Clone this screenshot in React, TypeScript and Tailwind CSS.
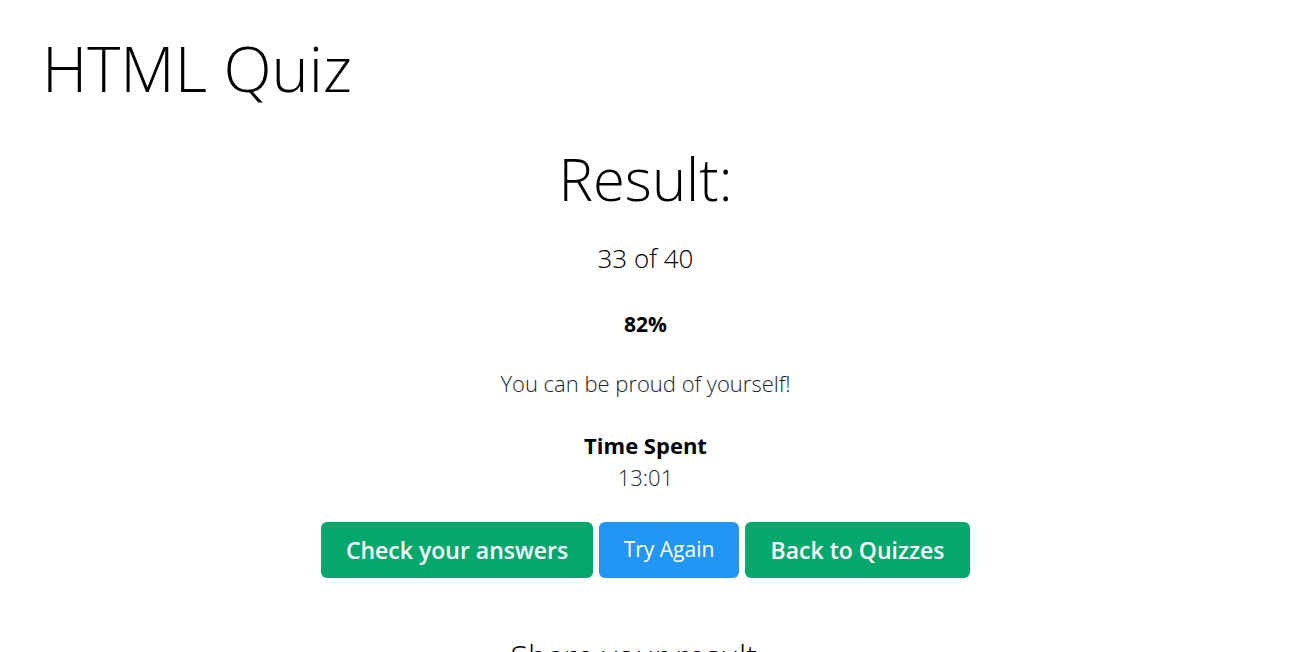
import React from "react";

export default function App() {
  return (
    <div className="min-h-screen overflow-hidden bg-white text-black" style={{ fontFamily: '"Open Sans", "Noto Sans", sans-serif' }}>
      <div className="px-[42px] pt-[30px]">
        <h1 className="text-[63px] font-light leading-[76px]">HTML Quiz</h1>
      </div>
      <div className="flex flex-col items-center pr-[3px] text-center">
        <h2 className="mt-[38px] text-[58px] font-light leading-[70px]">Result:</h2>
        <p className="mt-[26px] text-[26px] font-light leading-[36px]">33 of 40</p>
        <p className="mt-[33px] text-[21px] font-bold leading-[30px]">82%</p>
        <p className="mt-[28px] text-[22px] font-light leading-[32px] text-[#212529]">You can be proud of yourself!</p>
        <div className="mt-[30px] flex flex-col items-center">
          <p className="text-[22px] font-bold leading-[32px]">Time Spent</p>
          <p className="text-[22px] font-light leading-[32px] text-[#212529]">13:01</p>
        </div>
        <div className="mt-[29px] flex gap-[6px]">
          <button className="h-[56px] w-[272px] rounded-[6px] bg-[#04a86d] text-white text-[23px] font-semibold">Check your answers</button>
          <button className="h-[56px] w-[140px] rounded-[6px] bg-[#2196f3] text-white text-[21px] font-normal">Try Again</button>
          <button className="h-[56px] w-[225px] rounded-[6px] bg-[#04a86d] text-white text-[23px] font-semibold">Back to Quizzes</button>
        </div>
        <div className="mt-[58px] w-[270px] text-left">
          <h3 className="whitespace-nowrap text-[32px] font-light leading-[40px]">Share your result</h3>
        </div>
      </div>
    </div>
  );
}
